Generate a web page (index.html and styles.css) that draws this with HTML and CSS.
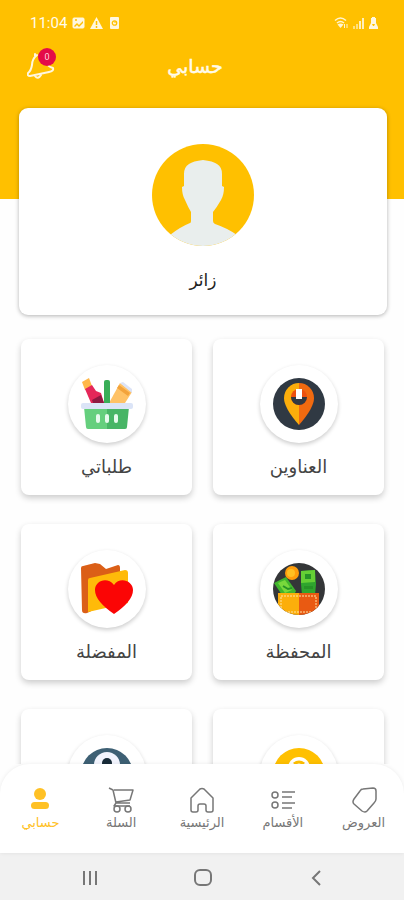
FILE: index.html
```
<!DOCTYPE html>
<html lang="ar" dir="rtl">
<head>
<meta charset="utf-8">
<meta name="viewport" content="width=device-width, initial-scale=1">
<title>حسابي</title>
<link rel="stylesheet" href="styles.css">
</head>
<body>
<main class="screen">
  <header class="hero">
    <div class="status" dir="ltr">
      <div class="status-group">
        <span class="clock">11:04</span>
        <svg width="13" height="12" viewBox="0 0 13 12"><rect x="1" y="1" width="11" height="10" rx="1" fill="#fff7df" stroke="#fff7df"/><path d="M2 9l3-3 2 2 4-4v2L7 10 5 8l-2 2z" fill="#ffc000"/><circle cx="4" cy="3" r="1" fill="#ffc000"/></svg>
        <svg width="13" height="12" viewBox="0 0 13 12"><path d="M6.500 0L13 12H0z" fill="#fff7df"/><path d="M6.500 4v4M6.500 9v2" stroke="#ffc000" stroke-width="1.500"/></svg>
        <svg class="status-doc" width="9" height="12" viewBox="0 0 9 12"><rect width="9" height="12" rx="1" fill="#fff7df"/><circle cx="4.500" cy="6" r="2.200" fill="none" stroke="#ffc000" stroke-width="1.300"/><path d="M4 5h3" stroke="#ffc000"/></svg>
      </div>
      <div class="status-group status-signal">
        <svg width="14" height="12" viewBox="0 0 14 12" fill="none" stroke="#fff4cf" stroke-width="1.500"><path d="M1 3.500q5.500-5 11 0M3 6q3.500-3 7 0"/><path d="M3.500 7.500q3-2 6 0L6.500 11z" fill="#fff4cf" stroke="none"/><path d="M10.500 11V7M13 7v4" stroke-width="1"/></svg>
        <svg width="13" height="12" viewBox="0 0 13 12" fill="#fff4cf"><path d="M1 9h2v3H1zM4 7h2v5H4z" opacity=".6"/><path d="M7 4h2v8H7zM10 1h2v11h-2z" opacity=".9"/></svg>
        <svg width="9" height="12" viewBox="0 0 9 12"><path d="M3 0h3v1h1v5l2 4v2H0v-2l2-4V1h1z" fill="#fff7df"/><path d="M3 7h3L5 9H4z" fill="#ffc000"/></svg>
      </div>
    </div>
    <div class="title-bar">
      <h1 class="title">حسابي</h1>
      <button class="bell" type="button" aria-label="الإشعارات">
        <svg width="28" height="28" viewBox="0 0 28 28" fill="none" stroke="#fff7df" stroke-width="2" stroke-linecap="round" stroke-linejoin="round"><path d="M10 3q-5 4-5 10-1 6-4 8-1 3 2 3l19-4q5-1 4-4-4-1-7-5M8 4V2M8 24q3 4 6-1"/></svg>
        <span class="badge">0</span>
      </button>
    </div>
  </header>

  <section class="profile">
    <svg class="avatar" width="102" height="102" viewBox="0 0 102 102">
      <defs><clipPath id="avatar-clip"><circle cx="51" cy="51" r="51"/></clipPath></defs>
      <g clip-path="url(#avatar-clip)"><rect width="102" height="102" fill="#ffc000"/><path d="M18 91q10-8 20-12 1 0 1-2v-9q-3-5-6-12-3-5-3-13l2-1V30q0-7 5-10 4-3 14-4 10 1 14 4 5 3 5 10v12l2 1q0 8-3 13-4 7-8 12v9q0 2 2 3 12 4 22 11v14H18z" fill="#e9eeed"/></g>
    </svg>
    <p class="profile-name">زائر</p>
  </section>

  <section class="menu">
    <button class="tile" type="button">
      <span class="disc"><svg width="52" height="52" viewBox="0 0 52 52"><circle cx="26" cy="26" r="26" fill="#303943"/><path d="M26 47Q11 30 11 20a15 15 0 0 1 15-15z" fill="#fcae0b"/><path d="M26 47q15-17 15-27A15 15 0 0 0 26 5z" fill="#f16a10"/><circle cx="26" cy="19" r="8" fill="#ec5010"/><path d="M18 19a8 8 0 0 0 16 0z" fill="#303943"/><path d="M23 11h6v10h-6z" fill="#fff"/></svg></span>
      <span class="tile-label">العناوين</span>
    </button>
    <button class="tile" type="button">
      <span class="disc"><svg width="52" height="52" viewBox="0 0 52 52"><path d="M1 4l7-4 3 8-7 4z" fill="#ffb749"/><path d="M4 11l7-4 4 6 5 2 3 10H10z" fill="#e52759"/><path d="M11 22l9-5 3 8H12z" fill="#8e1941"/><path d="M39 5l12 9-7 11H28z" fill="#ffc266"/><path d="M39 5l3-1 9 7v4z" fill="#dce3f6"/><path d="M38 7l11 8-2 3-11-8z" fill="#f3a33b"/><rect x="23" y="2" width="6" height="25" rx="2" fill="#39ae57"/><path d="M3 29h23v22H7q-2 0-2-2z" fill="#65cf7d"/><path d="M26 29h22l-2 20q0 2-2 2H26z" fill="#48b566"/><rect y="25" width="52" height="6" rx="2" fill="#dbe4f7"/><g fill="#e7faed"><rect x="15" y="36" width="4" height="9" rx="2"/><rect x="24" y="36" width="4" height="9" rx="2"/><rect x="33" y="36" width="4" height="9" rx="2"/></g></svg></span>
      <span class="tile-label">طلباتي</span>
    </button>
    <button class="tile" type="button">
      <span class="disc"><svg width="52" height="52" viewBox="0 0 52 52"><defs><clipPath id="wallet-clip"><circle cx="26" cy="26" r="26"/></clipPath></defs><g clip-path="url(#wallet-clip)"><rect width="52" height="52" fill="#343638"/><path d="M1 20l12-6 10 14-2 4H9z" fill="#41b62d"/><path d="M5 20l7-3 7 10-7 3z" fill="#78d83c"/><path d="M28 8l14-1 1 14-1 11H29l-1-11z" fill="#2fa52e"/><path d="M28 8l14-1v12l-14 1z" fill="#65cf35"/><path d="M32 11h6v5h-6zM31 23h9v3h-9z" fill="#279327"/><path d="M10 23l5 3 4-1" stroke="#279327" stroke-width="2" fill="none"/><circle cx="19" cy="10" r="7" fill="#ff9d0b"/><circle cx="18" cy="10" r="4" fill="#ffc022"/><path d="M5 30h21v22H5z" fill="#fcae0b"/><path d="M26 30h20v22H26z" fill="#e95a12"/><path d="M8 48V33h35v15M12 49h27" stroke="#ffe4a6" stroke-dasharray="2 1" fill="none"/></g></svg></span>
      <span class="tile-label">المحفظة</span>
    </button>
    <button class="tile" type="button">
      <span class="disc"><svg width="52" height="52" viewBox="0 0 52 52"><path d="M0 5q0-2 2-2l12-3 5 1 6 5 12-4q2 0 2 3v30L6 50q-5 1-5-3z" fill="#db5f17"/><path d="M7 17q0-2 2-2l35-8q3 0 3 3v30L7 49z" fill="#ffba09"/><path d="M33 51Q14 38 14 27c0-9 12-14 19-5 6-9 19-4 19 5Q52 38 33 51z" fill="#fb0505"/></svg></span>
      <span class="tile-label">المفضلة</span>
    </button>
    <button class="tile" type="button" aria-label="الملف الشخصي">
      <span class="disc"><svg width="52" height="52" viewBox="0 0 52 52"><circle cx="26" cy="26" r="26" fill="#ffc000"/><circle cx="26" cy="20" r="11" fill="#fff"/><path d="M21 16q5-4 10 0" stroke="#ffc000" stroke-width="3" fill="none"/></svg></span>
    </button>
    <button class="tile" type="button" aria-label="من نحن">
      <span class="disc"><svg width="52" height="52" viewBox="0 0 52 52"><circle cx="26" cy="26" r="26" fill="#3e6074"/><circle cx="26" cy="17" r="13" fill="#f2f4fd"/><circle cx="26" cy="15" r="5" fill="#182b38"/></svg></span>
    </button>
  </section>
</main>

<nav class="tabs">
  <a class="tab" href="#offers">
    <svg width="26" height="26" viewBox="0 0 26 26"><path d="M12 2l10-1q3 0 3 3v8q0 2-2 4l-7 8q-2 2-5 0l-8-7q-2-2 0-5l6-8q1-2 3-2z"/></svg>
    <span>العروض</span>
  </a>
  <a class="tab" href="#sections">
    <svg width="26" height="26" viewBox="0 0 26 26"><circle cx="5" cy="8" r="3"/><circle cx="5" cy="18" r="3"/><path d="M12 5h13M12 10h10M12 16h13M12 21h10"/></svg>
    <span>الأقسام</span>
  </a>
  <a class="tab" href="#home">
    <svg width="26" height="26" viewBox="0 0 26 26"><path d="M2 11L11 2q2-1 4 0l9 9v12q0 2-2 2h-3q-2 0-2-2v-4q0-2-2-2h-4q-2 0-2 2v4q0 2-2 2H4q-2 0-2-2z"/></svg>
    <span>الرئيسية</span>
  </a>
  <a class="tab" href="#cart">
    <svg width="26" height="26" viewBox="0 0 26 26"><path d="M1 1l4 2 3 13h14M6 3h19l-3 10-14 2M8 16l-2 3h16"/><circle cx="9" cy="22" r="3"/><circle cx="20" cy="22" r="3"/></svg>
    <span>السلة</span>
  </a>
  <a class="tab tab-active" href="#account" aria-current="page">
    <svg width="26" height="26" viewBox="0 0 26 26"><circle cx="13" cy="7" r="6"/><rect x="4" y="15" width="18" height="7" rx="3.500"/></svg>
    <span>حسابي</span>
  </a>
</nav>

<div class="system-nav" dir="ltr">
  <button type="button" aria-label="التطبيقات الأخيرة"><svg width="20" height="20" viewBox="0 0 20 20"><path d="M4 3v14M10 3v14M16 3v14"/></svg></button>
  <button type="button" aria-label="الشاشة الرئيسية"><svg width="20" height="20" viewBox="0 0 20 20"><rect x="2" y="2" width="16" height="15" rx="5"/></svg></button>
  <button type="button" aria-label="رجوع"><svg width="20" height="20" viewBox="0 0 20 20"><path d="M14 3l-7 7 7 7"/></svg></button>
</div>
</body>
</html>
```
FILE: styles.css
```
* {
  box-sizing: border-box;
}

body {
  margin: 0;
  height: 100vh;
  display: flex;
  flex-direction: column;
  background: #fefefe;
  color: #444;
  font-family: "DejaVu Sans", sans-serif;
}

button {
  border: 0;
  padding: 0;
  background: none;
  color: inherit;
  font: inherit;
}

svg {
  display: block;
  flex: none;
}

.screen {
  flex: 1;
  min-height: 0;
  overflow: hidden;
}

.hero {
  height: 199px;
  padding: 12px 26px 0;
  background: #ffc000;
  color: #fffbea;
}

.status,
.status-group,
.title-bar {
  display: flex;
  align-items: center;
}

.status {
  height: 22px;
  padding-left: 4px;
  justify-content: space-between;
}

.status-group {
  gap: 5px;
}

.status-doc {
  margin-left: 2px;
}

.status-signal {
  gap: 4px;
}

.clock {
  font: 15px/22px Roboto, sans-serif;
}

.title-bar {
  position: relative;
  justify-content: center;
  height: 64px;
}

.title {
  margin: 0 14px 0 0;
  font-size: 19px;
  line-height: 28px;
  font-weight: 400;
  -webkit-text-stroke: 0.5px currentColor;
}

.bell {
  position: absolute;
  left: 1px;
  top: 18px;
}

.badge {
  position: absolute;
  top: -4px;
  left: 11px;
  width: 18px;
  height: 18px;
  border-radius: 50%;
  background: #e40b48;
  color: #ffd3df;
  font: 9px/18px Roboto, sans-serif;
  text-align: center;
}

.profile {
  position: relative;
  margin: -91px 17px 0 19px;
  height: 207px;
  padding-top: 36px;
  display: flex;
  flex-direction: column;
  align-items: center;
  border-radius: 9px;
  background: #fff;
  box-shadow: 0 1px 4px rgba(0, 0, 0, 0.3);
}

.profile-name {
  margin: 20px 0 0;
  color: #222;
  font-size: 17px;
  line-height: 28px;
}

.menu {
  display: grid;
  grid-template-columns: 1fr 1fr;
  grid-auto-rows: 156px;
  gap: 29px 21px;
  padding: 24px 20px 24px 21px;
}

.tile {
  display: flex;
  flex-direction: column;
  align-items: center;
  padding-top: 26px;
  border-radius: 8px;
  background: #fff;
  box-shadow: 0 3px 6px rgba(0, 0, 0, 0.2);
}

.disc {
  display: grid;
  place-items: center;
  width: 78px;
  height: 78px;
  border-radius: 50%;
  background: #fff;
  box-shadow: 0 2px 4px rgba(0, 0, 0, 0.2);
}

.tile-label {
  margin-top: 12px;
  font-size: 18px;
  line-height: 24px;
}

.tabs {
  position: relative;
  display: grid;
  grid-template-columns: repeat(5, 1fr);
  height: 89px;
  padding-top: 23px;
  border-radius: 30px 30px 0 0;
  background: #fff;
  box-shadow: 0 0 4px rgba(0, 0, 0, 0.08);
}

.tab {
  display: flex;
  flex-direction: column;
  align-items: center;
  color: #777;
  font-size: 13px;
  line-height: 20px;
  text-decoration: none;
}

.tab svg {
  fill: none;
  stroke: currentColor;
  stroke-width: 1.5;
  stroke-linejoin: round;
}

.tab-active {
  color: #ffc125;
}

.tab-active svg {
  fill: currentColor;
  stroke: none;
}

.system-nav {
  display: flex;
  justify-content: space-around;
  align-items: center;
  height: 47px;
  padding: 2px 31px 0 33px;
  background: #f1f1f1;
}

.system-nav svg {
  fill: none;
  stroke: #777;
  stroke-width: 2;
}
```
